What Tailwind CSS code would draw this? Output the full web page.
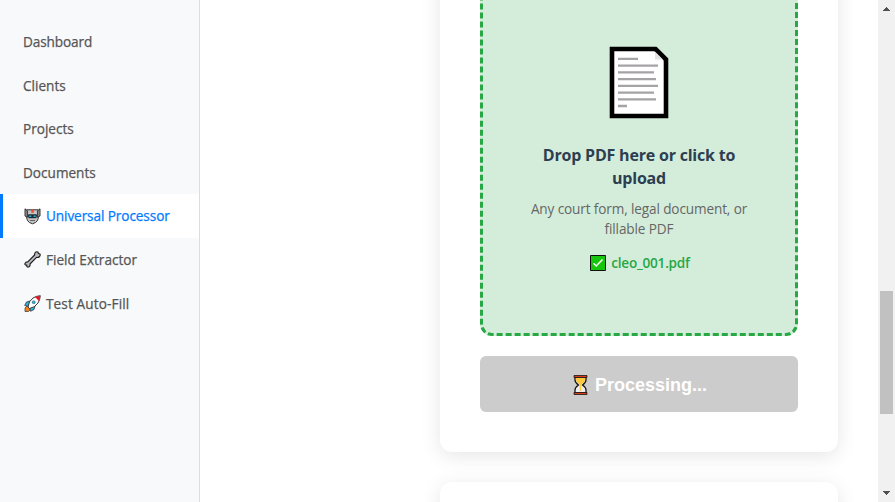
<!DOCTYPE html>
<html lang="en">
<head>
<meta charset="utf-8">
<title>Universal Processor</title>
<script src="https://cdn.jsdelivr.net/npm/@tailwindcss/browser@4"></script>
</head>
<body class="h-[502px] overflow-hidden bg-white font-['Segoe_UI','Open_Sans',sans-serif]">
<div class="flex h-[502px] w-[895px]">
  <nav class="flex w-[200px] shrink-0 flex-col border-r border-[#dddddd] bg-[#f8f9fa] pt-5 text-[13.6px] font-medium text-[#555] [-webkit-text-stroke:0.25px_currentColor]">
    <a class="flex h-[43.6px] items-center border-l-3 border-transparent pt-px pl-5"><span class="tracking-[-0.12px]">Dashboard</span></a>
    <a class="flex h-[43.6px] items-center border-l-3 border-transparent pt-px pl-5"><span>Clients</span></a>
    <a class="flex h-[43.6px] items-center border-l-3 border-transparent pt-px pl-5"><span>Projects</span></a>
    <a class="flex h-[43.6px] items-center border-l-3 border-transparent pt-px pl-5"><span>Documents</span></a>
    <a class="flex h-[43.6px] items-center border-l-3 border-[#007bff] bg-white pl-5 text-[#007bff]">
      <svg class="mr-[4px] h-[19px] w-[19px] shrink-0" viewBox="0 0 19 19" stroke-linejoin="round"><path d="M3.800 2.800h11.400v9q-.7 2.400-2.700 3.700l-3 1.300-3-1.300q-2-1.300-2.700-3.700z" fill="#c4c4c4" stroke="#333"/><path d="M2 1.800l2.300 2v6.500L2 9zM17 1.800l-2.300 2v6.500L17 9z" fill="#999" stroke="#222" stroke-width=".9"/><path d="M8.300 2.500h2.400v3.300H8.300z" fill="#ef4b32"/><path d="M5.800 7.300h7.400q.8 0 .8 1.300t-.8 2.700H5.800Q5 10 5 8.600t.8-1.300z" fill="#202a30"/><path d="M6.300 8.500h2v1.600h-2zM10.700 8.500h2v1.600h-2z" fill="#19bce8"/><path d="M7 13.500h5" stroke="#666"/></svg><span class="tracking-[-0.09px]">Universal Processor</span></a>
    <a class="flex h-[43.6px] items-center border-l-3 border-transparent pl-5">
      <svg class="mr-[4px] h-[19px] w-[19px] shrink-0" viewBox="0 0 19 19"><path d="M2 13.600q.8-1.900 2.800-1.700L11.600 5q-.2-2.300 1.300-3 1.300-.6 2.200.2l.2 1.300 1.500.4q.8 1.300-.2 2.600-1.100 1.300-3.100.9L7 14q.4 1.900-.9 2.800-1.200.6-2.200-.2l-.1-1.400-1.500-.4q-.5-.5-.3-1.200z" fill="#bbb" stroke="#222" stroke-width="1.200" stroke-linejoin="round"/></svg><span>Field Extractor</span></a>
    <a class="flex h-[43.6px] items-center border-l-3 border-transparent pt-px pl-5">
      <svg class="mr-[4px] h-[19px] w-[19px] shrink-0" viewBox="0 0 19 19"><path d="M4.500 11.500L2 14v3.500h3.500L8 15z" fill="#f58220" stroke="#333" stroke-width=".7"/><path d="M7 7L3.500 8 1.700 11.500l3.800 1zM12 12l-1 3.500L7.500 17.300l-1-3.800z" fill="#22b8e8" stroke="#333" stroke-width=".8"/><path d="M5 13Q5.500 7 10 4 13 2 17.300 1.700 17 6 15 9q-3 4.500-8.500 5.500z" fill="#fff" stroke="#222" stroke-width=".9"/><path d="M12 2.900q2-1 5-1 0 3-1 5z" fill="#e81224"/><circle cx="10.700" cy="8.200" r="1.500" fill="#22b8e8" stroke="#245" stroke-width=".5"/></svg><span class="tracking-[0.12px]">Test Auto-Fill</span></a>
  </nav>
  <main class="flex h-[502px] flex-1 flex-col items-end overflow-hidden pr-10">
    <section class="-mt-[80px] w-[398px] shrink-0 rounded-[12px] bg-white p-10 shadow-[0_4px_20px_rgba(0,0,0,0.1)]">
      <div class="flex h-[376px] flex-col items-center rounded-[12px] border-3 border-dashed border-[#28a745] bg-[#d4edda] pt-[83px] text-center">
        <svg class="h-[73px] w-[60px] shrink-0" viewBox="0 0 60 73"><path d="M3 3h43.500L57 13.500V70H3z" fill="#fff" stroke="#000" stroke-width="4.600"/><path d="M46 5v8.500h9z" fill="#e2e2e2"/><path d="M46 2.500L57.500 14" stroke="#000" stroke-width="4"/><path d="M9 12.800h20M9 19.600h40M9 26.400h36M9 33.100h38M9 39.900h40M9 46.600h36M9 53.300h38M9 60h9" stroke="#a5a3a5" stroke-width="2.300"/></svg>
        <h3 class="mt-[25px] text-[16px] leading-[23px] font-bold tracking-[-0.2px] text-[#2c3e50]">Drop PDF here or click to<br>upload</h3>
        <p class="mt-[9px] text-[13.600px] leading-[20px] tracking-[-0.13px] text-[#666]">Any court form, legal document, or<br>fillable PDF</p>
        <div class="mt-[14px] flex h-5 items-center pl-[2px] text-[13.6px] leading-5 font-semibold text-[#28a745]"><svg class="mr-[5px] h-4 w-4" viewBox="0 0 16 16"><path d="M.5.500h15v15H.5z" fill="#16c60c" stroke="#111"/><path d="M3.500 8.300l2.700 2.700 6.300-6.500" fill="none" stroke="#fff" stroke-width="1.500"/></svg><span class="tracking-[-0.23px]">cleo_001.pdf</span></div>
      </div>
      <button class="mt-5 flex h-[56px] w-full items-center justify-center rounded-[6px] bg-[#ccc] pt-[2px] pl-[2px] font-['Liberation_Sans',sans-serif] text-[18px] font-bold text-white"><svg class="mr-[7px] h-5 w-[15px]" viewBox="0 0 15 20"><path d="M2 2v3q0 2.500 3.500 5Q2 12.500 2 15v3h11v-3q0-2.500-3.500-5Q13 7.500 13 5V2z" fill="#eee" stroke="#171717" stroke-width="1.300"/><path d="M3 3h9v2q0 2-3.800 4.500V16H6.800V9.500Q3 7 3 5z" fill="#ffc83d"/><path d="M1 .500h13v2H1zM1 17.500h13v2H1z" fill="#d83b16" stroke="#171717" stroke-width=".8"/></svg><span>Processing...</span></button>
    </section>
    <section class="mt-[30px] h-[200px] w-[398px] shrink-0 rounded-[12px] bg-white shadow-[0_4px_20px_rgba(0,0,0,0.1)]"></section>
  </main>
  <aside class="flex w-[17px] shrink-0 flex-col items-center bg-[#f1f1f1]">
    <svg class="h-[17px] w-[17px] shrink-0" viewBox="0 0 17 17" shape-rendering="crispEdges"><path d="M8 7h1v1h1v1h1v1h1v1H5v-1h1V9h1V8h1z" fill="#505050"/></svg>
    <div class="mt-[274px] h-[123px] w-[13px] bg-[#c1c1c1]"></div>
    <svg class="mt-auto h-[17px] w-[17px] shrink-0" viewBox="0 0 17 17" shape-rendering="crispEdges"><path d="M5 6h7v1h-1v1h-1v1H9v1H8V9H7V8H6V7H5z" fill="#505050"/></svg>
  </aside>
</div>
</body>
</html>
